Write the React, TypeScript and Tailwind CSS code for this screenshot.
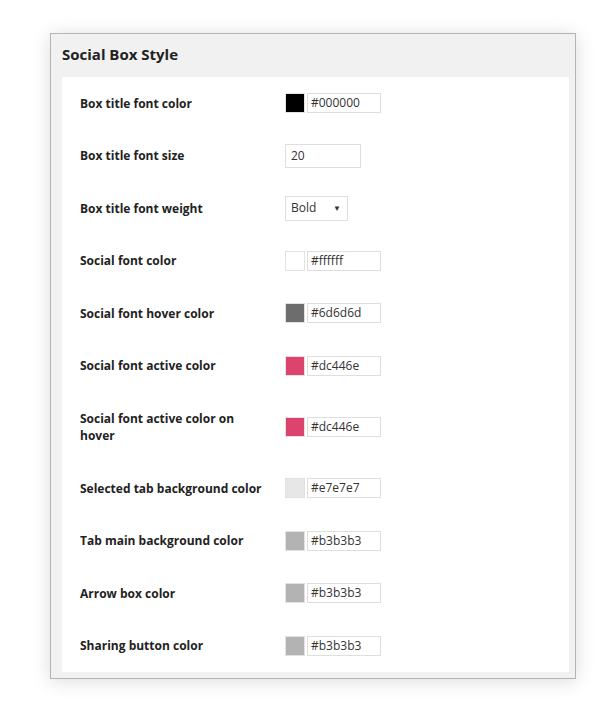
import React from "react";

type Row = { label: string; kind: "color" | "number" | "select"; value: string; swatch?: string; tall?: boolean };

const rows: Row[] = [
  { label: "Box title font color", kind: "color", value: "#000000", swatch: "#000000" },
  { label: "Box title font size", kind: "number", value: "20" },
  { label: "Box title font weight", kind: "select", value: "Bold" },
  { label: "Social font color", kind: "color", value: "#ffffff", swatch: "#ffffff" },
  { label: "Social font hover color", kind: "color", value: "#6d6d6d", swatch: "#6d6d6d" },
  { label: "Social font active color", kind: "color", value: "#dc446e", swatch: "#dc446e" },
  { label: "Social font active color on hover", kind: "color", value: "#dc446e", swatch: "#dc446e", tall: true },
  { label: "Selected tab background color", kind: "color", value: "#e7e7e7", swatch: "#e7e7e7" },
  { label: "Tab main background color", kind: "color", value: "#b3b3b3", swatch: "#b3b3b3" },
  { label: "Arrow box color", kind: "color", value: "#b3b3b3", swatch: "#b3b3b3" },
  { label: "Sharing button color", kind: "color", value: "#b3b3b3", swatch: "#b3b3b3" },
];

function Control({ row }: { row: Row }) {
  if (row.kind === "color") {
    return (
      <div className="flex items-center gap-[2px]">
        <div className="w-[20px] h-[20px] border border-[#e2e2e2]" style={{ backgroundColor: row.swatch }} />
        <div className="w-[74px] h-[20px] border border-[#dedede] bg-white flex items-center pl-[3px] text-[12px] text-[#333] leading-none">
          {row.value}
        </div>
      </div>
    );
  }
  if (row.kind === "number") {
    return (
      <div className="w-[76px] h-[24px] border border-[#dedede] bg-white flex items-center pl-[5px] text-[12px] text-[#333] leading-none">
        {row.value}
      </div>
    );
  }
  return (
    <div className="w-[63px] h-[25px] border border-[#dedede] bg-white flex items-center justify-between pl-[5px] pr-[6px] text-[12px] text-[#333] leading-none">
      <span>{row.value}</span>
      <span className="text-[8px]">▼</span>
    </div>
  );
}

export default function App() {
  return (
    <div
      className="w-[600px] h-[715px] bg-white pt-[33px] pl-[50px]"
      style={{ fontFamily: '"Open Sans", "Noto Sans", sans-serif' }}
    >
      <div className="w-[526px] border border-[#b4b4b4] bg-[#f1f1f1] shadow-[0_2px_18px_rgba(0,0,0,0.14)]">
        <div className="h-[43px] flex items-center pl-[11px] pb-[3px] text-[15px] font-bold text-[#222]">
          Social Box Style
        </div>
        <div className="ml-[11px] mr-[6px] mb-[6px] bg-white">
          {rows.map((r) => (
            <div key={r.label} className={`flex items-center pl-[18px] ${r.tall ? "h-[70px]" : "h-[52.5px]"}`}>
              <div className="w-[205px] shrink-0 pr-[20px] text-[12px] font-bold text-[#222] leading-[17px]">{r.label}</div>
              <Control row={r} />
            </div>
          ))}
        </div>
      </div>
    </div>
  );
}
